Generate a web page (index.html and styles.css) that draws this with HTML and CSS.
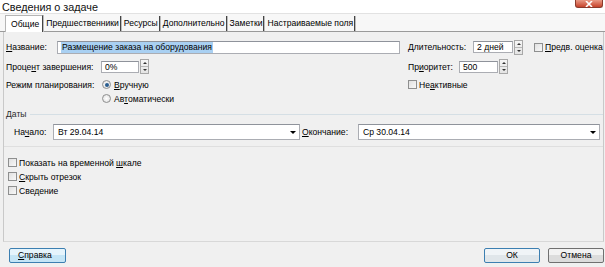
FILE: index.html
```html
<!DOCTYPE html>
<html>
	<head>
		<meta charset="UTF-8">
		<title>Сведения о задаче</title>
		<link rel="stylesheet" href="styles.css">
	</head>
	<body>
		<div class="win">
			<!--заголовок окна-->
			<div class="titlebar">
				<span class="ttl">Сведения о задаче</span>
				<span class="close"><svg width="8" height="6" viewBox="0 0 8 6"><path d="M1 0L7 6M7 0L1 6" stroke="#fff" stroke-width="1.6"/></svg></span>
			</div>
			<!--вкладки-->
			<div class="tabs">
				<div class="tab on">Общие</div>
				<div class="tab">Предшественники</div>
				<div class="tab">Ресурсы</div>
				<div class="tab">Дополнительно</div>
				<div class="tab">Заметки</div>
				<div class="tab">Настраиваемые поля</div>
			</div>
			<div class="panel">
				<div class="row r1">
					<div class="lcol">
						<span class="lbl w51"><u>Н</u>азвание:</span>
						<span class="inp name"><span class="sel">Размещение заказа на оборудования</span></span>
					</div>
					<div class="rcol">
						<span class="lbl w65"><u>Д</u>лительность:</span>
						<span class="inp dur">2 дней</span>
						<span class="spin"><i class="up"></i><i class="dn"></i></span>
						<span class="chk ml11"></span>
						<span class="clbl"><u>П</u>редв. оценка</span>
					</div>
				</div>
				<div class="row r2">
					<div class="lcol">
						<span class="lbl w95">Проце<u>н</u>т завершения:</span>
						<span class="inp pct">0%</span>
						<span class="spin"><i class="up"></i><i class="dn"></i></span>
					</div>
					<div class="rcol">
						<span class="lbl w51">Пр<u>и</u>оритет:</span>
						<span class="inp pri">500</span>
						<span class="spin"><i class="up"></i><i class="dn"></i></span>
					</div>
				</div>
				<div class="row r3">
					<div class="lcol">
						<span class="lbl w95">Режим планирования:</span>
						<span class="radio on"></span>
						<span class="clbl"><u>В</u>ручную</span>
					</div>
					<div class="rcol">
						<span class="chk"></span>
						<span class="clbl">Не<u>а</u>ктивные</span>
					</div>
				</div>
				<div class="row r4">
					<div class="lcol">
						<span class="lbl w95"></span>
						<span class="radio"></span>
						<span class="clbl">Ав<u>т</u>оматически</span>
					</div>
				</div>
				<div class="group">
					<span class="gttl">Даты</span>
					<span class="gline"></span>
				</div>
				<div class="row dates">
					<span class="lbl w39">На<u>ч</u>ало:</span>
					<span class="combo start">Вт 29.04.14<i class="arr"></i></span>
					<span class="lbl w56"><u>О</u>кончание:</span>
					<span class="combo end">Ср 30.04.14<i class="arr"></i></span>
				</div>
				<div class="sep"></div>
				<div class="checks">
					<div class="crow"><span class="chk"></span><span class="clbl">Показать на временной <u>ш</u>кале</span></div>
					<div class="crow"><span class="chk"></span><span class="clbl"><u>С</u>крыть отрезок</span></div>
					<div class="crow"><span class="chk"></span><span class="clbl">Сведение</span></div>
				</div>
			</div>
			<!--кнопки внизу-->
			<div class="btns">
				<span class="btn help"><u>С</u>правка</span>
				<span class="fill"></span>
				<span class="btn ok">ОК</span>
				<span class="btn">Отмена</span>
			</div>
		</div>
	</body>
</html>
```
FILE: styles.css
```css
*{
	margin: 0;
	padding: 0;
	box-sizing: border-box;
}
body{
	width: 605px;
	height: 267px;
	overflow: hidden;
	background-color: #f0f0f0;
	font-family: "Liberation Sans", Arial, sans-serif;
	font-size: 8.6px;
	color: #000;
}
u{
	text-decoration: underline;
}
.win{
	width: 605px;
	height: 267px;
	display: flex;
	flex-direction: column;
}
.titlebar{
	height: 14px;
	background-color: #fff;
	display: flex;
	justify-content: space-between;
	align-items: flex-start;
	border-bottom: 1px solid #e2e2e2;
}
.ttl{
	font-size: 10.8px;
	line-height: 12px;
	padding: 1px 0 0 2px;
	color: #111;
}
.close{
	width: 28px;
	height: 8px;
	margin-right: 2px;
	background: linear-gradient(#e99a86, #c7422a);
	border: 1px solid #8a3b2d;
	border-top: none;
	border-radius: 0 0 3px 3px;
	display: flex;
	justify-content: center;
	align-items: center;
}
.tabs{
	height: 18px;
	background-color: #f7f7f7;
	display: flex;
	align-items: flex-end;
	padding-left: 5px;
	border-bottom: 1px solid #9a9a9a;
}
.tab{
	height: 15px;
	line-height: 14px;
	padding: 0 1px 0 2px;
	border-right: 1px solid #444;
	box-shadow: 1px 0 0 #bbb;
	margin-right: 1px;
	background-color: #f7f7f7;
}
.tab.on{
	height: 17px;
	line-height: 16px;
	background-color: #fff;
	border: 1px solid #b5b5b5;
	border-bottom: none;
	border-right: 1px solid #444;
	padding: 0 3px 0 5px;
	margin-bottom: -1px;
}
.panel{
	flex: 1;
	margin: 0 1px 0 3px;
	border-left: 1px solid #c9c9c9;
	border-right: 1px solid #c9c9c9;
	border-bottom: 1px solid #d8d8d8;
	padding-left: 2px;
	display: flex;
	flex-direction: column;
}
.row{
	display: flex;
	align-items: center;
}
.lcol{
	width: 402px;
	display: flex;
	align-items: center;
}
.rcol{
	display: flex;
	align-items: center;
}
.r1{
	margin-top: 7px;
	height: 16px;
}
.r2{
	margin-top: 4px;
	height: 15px;
}
.r3{
	margin-top: 5px;
	height: 11px;
}
.r4{
	margin-top: 3px;
	height: 11px;
}
.lbl{
	flex: none;
}
.w51{ width: 51px; }
.w65{ width: 65px; }
.w95{ width: 95px; }
.w39{ width: 39px; }
.w56{ width: 56px; }
.inp{
	height: 100%;
	background-color: #fff;
	border: 1px solid #abadb3;
	border-top-color: #8f939b;
	display: flex;
	align-items: center;
	padding-left: 3px;
	white-space: nowrap;
}
.name{
	width: 343px;
}
.sel{
	background-color: #a9d0f2;
	padding: 0 1px;
	line-height: 11px;
}
.dur{ width: 40px; }
.pct{ width: 38px; }
.pri{ width: 39px; }
.spin{
	width: 9px;
	height: 15px;
	margin-left: 1px;
	border: 1px solid #a8a8a8;
	display: flex;
	flex-direction: column;
	background: linear-gradient(#f6f6f6, #e4e4e4);
}
.spin i{
	flex: 1;
	display: flex;
	justify-content: center;
	align-items: center;
}
.spin .up{
	border-bottom: 1px solid #b8b8b8;
}
.spin .up::after{
	content: "";
	border: 2px solid transparent;
	border-bottom: 2px solid #333;
	border-top: none;
}
.spin .dn::after{
	content: "";
	border: 2px solid transparent;
	border-top: 2px solid #333;
	border-bottom: none;
}
.chk{
	flex: none;
	width: 9px;
	height: 9px;
	border: 1px solid #8e8f8f;
	background: linear-gradient(135deg, #e0e0e0, #f8f8f8);
}
.ml11{ margin-left: 11px; }
.clbl{
	margin-left: 2px;
	white-space: nowrap;
}
.radio{
	flex: none;
	width: 9px;
	height: 9px;
	border-radius: 50%;
	border: 1px solid #8e8f8f;
	background: radial-gradient(#fff, #dcdcdc);
	margin-left: 1px;
	margin-right: 1px;
	display: flex;
	justify-content: center;
	align-items: center;
}
.radio.on::after{
	content: "";
	width: 4px;
	height: 4px;
	border-radius: 50%;
	background-color: #2a5d8f;
}
.group{
	margin-top: 5px;
	height: 10px;
	display: flex;
	align-items: center;
}
.gttl{
	color: #2b2b2b;
}
.gline{
	flex: 1;
	height: 1px;
	margin-left: 3px;
	background-color: #d5dfe5;
}
.dates{
	margin-top: 5px;
	height: 16px;
	padding-left: 8px;
}
.combo{
	height: 16px;
	background-color: #fff;
	border: 1px solid #abadb3;
	border-top-color: #8f939b;
	display: flex;
	align-items: center;
	justify-content: space-between;
	padding: 0 3px 0 4px;
}
.start{
	width: 247px;
	margin-right: 2px;
}
.end{
	width: 242px;
}
.arr{
	border: 3px solid transparent;
	border-top: 3px solid #000;
	border-bottom: none;
}
.sep{
	margin-top: 6px;
	margin-left: -2px;
	height: 1px;
	background-color: #dfdfdf;
}
.checks{
	margin-top: 11px;
	display: flex;
	flex-direction: column;
	gap: 5px;
	padding-left: 2px;
}
.crow{
	display: flex;
	align-items: center;
	height: 9px;
}
.btns{
	height: 25px;
	display: flex;
	align-items: flex-start;
	padding: 6px 1px 0 9px;
	gap: 8px;
}
.fill{
	flex: 1;
}
.btn{
	width: 56px;
	height: 15px;
	border: 1px solid #707070;
	border-radius: 2px;
	background: linear-gradient(#f2f2f2 50%, #dcdcdc 50%);
	text-align: center;
	line-height: 13px;
}
.help{
	width: 57px;
	border-color: #3c7fb1;
	background: linear-gradient(#e5f4fc 50%, #c4e5f6 50%);
	text-align: left;
	padding-left: 8px;
}
.ok{
	border-color: #3c7fb1;
	background: linear-gradient(#f0f4f7 50%, #e0e6ea 50%);
}
```
